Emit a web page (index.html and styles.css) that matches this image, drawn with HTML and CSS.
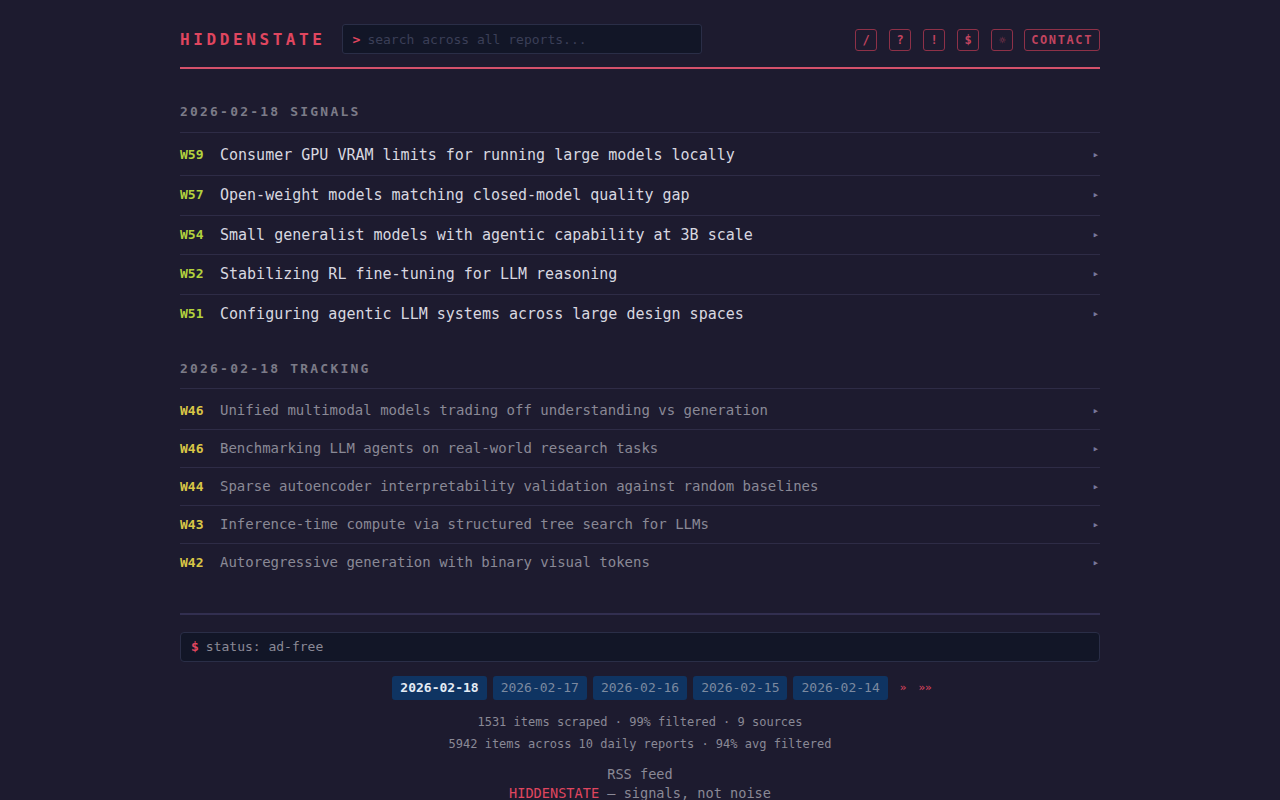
FILE: index.html
```html
<!DOCTYPE html>
<html lang="en">

<head>
    <meta charset="UTF-8">
    <meta name="viewport" content="width=device-width, initial-scale=1.0">
    <title>HIDDENSTATE</title>
    <link rel="stylesheet" href="styles.css">
</head>

<body>

    <div class="container">
        <header class="top">
            <a class="logo" href="#">HIDDENSTATE</a>
            <div class="search">
                <span class="prompt">&gt;</span>
                <input type="text" placeholder="search across all reports...">
            </div>
            <nav class="tools">
                <a class="tool" href="#">/</a>
                <a class="tool" href="#">?</a>
                <a class="tool" href="#">!</a>
                <a class="tool" href="#">$</a>
                <a class="tool tool-dim" href="#">&#9788;</a>
                <a class="tool contact" href="#">CONTACT</a>
            </nav>
        </header>

        <section class="section signals">
            <h2 class="section-title">2026-02-18 SIGNALS</h2>
            <ul class="items">
                <li class="item"><span class="badge">W59</span><span class="title">Consumer GPU VRAM limits for running large models locally</span><span class="arrow">&#9656;</span></li>
                <li class="item"><span class="badge">W57</span><span class="title">Open-weight models matching closed-model quality gap</span><span class="arrow">&#9656;</span></li>
                <li class="item"><span class="badge">W54</span><span class="title">Small generalist models with agentic capability at 3B scale</span><span class="arrow">&#9656;</span></li>
                <li class="item"><span class="badge">W52</span><span class="title">Stabilizing RL fine-tuning for LLM reasoning</span><span class="arrow">&#9656;</span></li>
                <li class="item"><span class="badge">W51</span><span class="title">Configuring agentic LLM systems across large design spaces</span><span class="arrow">&#9656;</span></li>
            </ul>
        </section>

        <section class="section tracking">
            <h2 class="section-title">2026-02-18 TRACKING</h2>
            <ul class="items">
                <li class="item"><span class="badge">W46</span><span class="title">Unified multimodal models trading off understanding vs generation</span><span class="arrow">&#9656;</span></li>
                <li class="item"><span class="badge">W46</span><span class="title">Benchmarking LLM agents on real-world research tasks</span><span class="arrow">&#9656;</span></li>
                <li class="item"><span class="badge">W44</span><span class="title">Sparse autoencoder interpretability validation against random baselines</span><span class="arrow">&#9656;</span></li>
                <li class="item"><span class="badge">W43</span><span class="title">Inference-time compute via structured tree search for LLMs</span><span class="arrow">&#9656;</span></li>
                <li class="item"><span class="badge">W42</span><span class="title">Autoregressive generation with binary visual tokens</span><span class="arrow">&#9656;</span></li>
            </ul>
        </section>

        <footer class="bottom">
            <div class="status"><span class="prompt">$</span> status: ad-free</div>

            <div class="dates">
                <a class="date active" href="#">2026-02-18</a>
                <a class="date" href="#">2026-02-17</a>
                <a class="date" href="#">2026-02-16</a>
                <a class="date" href="#">2026-02-15</a>
                <a class="date" href="#">2026-02-14</a>
                <a class="more" href="#">&raquo;</a>
                <a class="more" href="#">&raquo;&raquo;</a>
            </div>

            <div class="stats">
                <p>1531 items scraped &middot; 99% filtered &middot; 9 sources</p>
                <p>5942 items across 10 daily reports &middot; 94% avg filtered</p>
            </div>

            <div class="colophon">
                <p><a href="#">RSS feed</a></p>
                <p><span class="brand">HIDDENSTATE</span> &mdash; signals, not noise</p>
            </div>
        </footer>
    </div>

</body>

</html>
```

FILE: styles.css
```css
body {
    font-family: 'DejaVu Sans Mono', 'Liberation Mono', monospace;
    background-color: #1d1b2f;
    color: #d6d6de;
    margin: 0;
    padding: 0;
}

a {
    text-decoration: none;
    color: inherit;
}

ul {
    list-style: none;
    margin: 0;
    padding: 0;
}

p {
    margin: 0;
}

.container {
    width: 920px;
    margin: 0 auto;
}

/* header */

.top {
    display: flex;
    align-items: center;
    padding: 24px 0 13px;
    border-bottom: 2px solid #d4516b;
}

.logo {
    font-size: 16px;
    font-weight: bold;
    letter-spacing: 3.6px;
    color: #e0465f;
}

.search {
    display: flex;
    align-items: center;
    width: 360px;
    height: 30px;
    box-sizing: border-box;
    margin-left: 16px;
    padding: 0 10px;
    background-color: #121627;
    border: 1px solid #2a2e47;
    border-radius: 3px;
}

.search .prompt {
    color: #e0465f;
    font-weight: bold;
    font-size: 13px;
    margin-right: 7px;
}

.search input {
    flex: 1;
    background: transparent;
    border: none;
    outline: none;
    padding: 0;
    font-family: inherit;
    font-size: 13px;
    color: #c8c8d0;
}

.search input::placeholder {
    color: #3b3f57;
}

.tools {
    margin-left: auto;
    margin-top: 2px;
    display: flex;
    gap: 12px;
}

.tool {
    display: flex;
    align-items: center;
    justify-content: center;
    min-width: 22px;
    height: 22px;
    box-sizing: border-box;
    border: 1px solid #8e3148;
    border-radius: 3px;
    font-size: 12px;
    font-weight: bold;
    color: #c2445f;
}

.tool-dim {
    color: #a8405a;
    font-size: 11px;
    font-weight: normal;
}

.contact {
    padding: 0 6px;
    letter-spacing: 1.6px;
    margin-left: -1px;
}

/* sections */

.section {
    margin-top: 33px;
}

.tracking {
    margin-top: 25px;
}

.section-title {
    margin: 0;
    padding-bottom: 10px;
    border-bottom: 1px solid #2e2c46;
    font-size: 13px;
    line-height: 20px;
    letter-spacing: 2.2px;
    color: #7c7b88;
}

.tracking .section-title {
    padding-bottom: 9px;
}

.items {
    padding-top: 3px;
}

.item {
    display: flex;
    align-items: center;
    padding: 9px 0;
    border-bottom: 1px solid #2e2c46;
    line-height: 20.75px;
}

.item:last-child {
    border-bottom: none;
}

.badge {
    width: 40px;
    flex-shrink: 0;
    font-size: 13px;
    font-weight: bold;
}

.title {
    flex: 1;
    font-size: 15px;
}

.arrow {
    font-size: 11px;
    color: #77769a;
    margin-right: 1px;
}

.signals .badge {
    color: #b3d23d;
}

.signals .title {
    color: #d8d8e0;
}

.tracking .item {
    line-height: 19px;
}

.tracking .badge {
    color: #d9c646;
}

.tracking .title {
    font-size: 14px;
    color: #8a8996;
}

/* footer */

.bottom {
    margin-top: 32px;
    border-top: 2px solid #322f50;
    padding-top: 17px;
    text-align: center;
}

.status {
    height: 30px;
    box-sizing: border-box;
    padding: 0 10px;
    display: flex;
    align-items: center;
    gap: 7px;
    background-color: #121627;
    border: 1px solid #2a2e47;
    border-radius: 4px;
    font-size: 13px;
    color: #8a8996;
    text-align: left;
}

.status .prompt {
    color: #e0465f;
    font-weight: bold;
}

.dates {
    display: flex;
    justify-content: center;
    align-items: center;
    gap: 6px;
    margin-top: 14px;
    padding-left: 44px;
}

.date {
    height: 24px;
    line-height: 24px;
    padding: 0 8px;
    border-radius: 3px;
    background-color: #0f3462;
    font-size: 13px;
    color: #7c8aa0;
}

.date.active {
    font-weight: bold;
    color: #e4ebf4;
}

.more {
    font-size: 11px;
    color: #e0465f;
    margin-left: 6px;
}

.stats {
    margin-top: 11px;
    font-size: 12px;
    line-height: 22px;
    color: #8a8996;
}

.colophon {
    margin-top: 10px;
    font-size: 13.6px;
    line-height: 19px;
    color: #8a8996;
}

.brand {
    color: #e0465f;
}
```
